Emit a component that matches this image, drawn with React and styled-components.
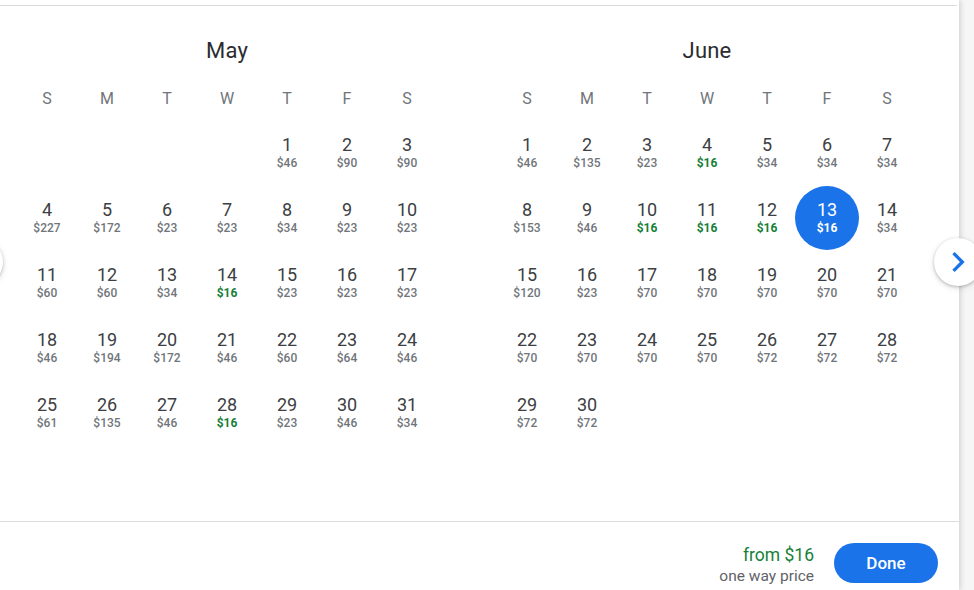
import styled, { createGlobalStyle } from "styled-components";

const GlobalStyle = createGlobalStyle`
  html, body {
    margin: 0;
    padding: 0;
    background: #f6f6f6;
    font-family: Roboto, "Noto Sans", Arial, sans-serif;
    overflow: hidden;
  }
`;

const Panel = styled.section`
  position: relative;
  width: 959px;
  height: 590px;
  background: #fff;
  box-shadow: 1px 0 6px rgba(0, 0, 0, 0.18);
  display: flex;
  flex-direction: column;
  padding-top: 5px;
  box-sizing: border-box;
`;

const TopRule = styled.div`
  border-top: 1px solid #dadce0;
  margin-right: 2px;
`;

const Months = styled.div`
  flex: 1;
  display: flex;
  gap: 60px;
  padding-left: 17px;
`;

const Month = styled.div`
  width: 420px;
  display: flex;
  flex-direction: column;
`;

const MonthTitle = styled.h2`
  margin: 31px 0 0;
  font-size: 22px;
  line-height: 28px;
  font-weight: 400;
  color: #2b2c2f;
  text-align: center;
  letter-spacing: 0.2px;
`;

const Weekdays = styled.div`
  display: grid;
  grid-template-columns: repeat(7, 60px);
  margin-top: 24px;
  font-size: 16px;
  line-height: 20px;
  color: #70757a;
  text-align: center;
`;

const Days = styled.div`
  display: grid;
  grid-template-columns: repeat(7, 60px);
  grid-auto-rows: 65px;
  margin-top: 11px;
`;

const Day = styled.div`
  grid-column-start: ${(p) => p.$start || "auto"};
  display: flex;
  align-items: center;
  justify-content: center;
`;

const DayInner = styled.div`
  width: 64px;
  height: 64px;
  flex-shrink: 0;
  border-radius: 50%;
  display: flex;
  flex-direction: column;
  align-items: center;
  justify-content: center;
  background: ${(p) => (p.$selected ? "#1a73e8" : "transparent")};
`;

const DayNum = styled.span`
  font-size: 18px;
  line-height: 20px;
  color: ${(p) => (p.$selected ? "#fff" : "#3c4043")};
`;

const Price = styled.span`
  font-size: 12px;
  line-height: 16px;
  font-weight: ${(p) => (p.$low || p.$selected ? 700 : 500)};
  color: ${(p) => (p.$selected ? "#fff" : p.$low ? "#188038" : "#70757a")};
`;

const Footer = styled.footer`
  height: 69px;
  box-sizing: border-box;
  border-top: 1px solid #dadce0;
  display: flex;
  justify-content: flex-end;
  align-items: flex-start;
  gap: 20px;
  padding: 21px 21px 0 0;
`;

const Summary = styled.div`
  display: flex;
  flex-direction: column;
  align-items: flex-end;
  margin-top: 2px;
`;

const FromPrice = styled.span`
  font-size: 17.5px;
  line-height: 20px;
  color: #188038;
`;

const PriceNote = styled.span`
  font-size: 15.5px;
  line-height: 22px;
  color: #5f6368;
`;

const DoneButton = styled.button`
  width: 104px;
  height: 40px;
  border: none;
  border-radius: 20px;
  background: #1a73e8;
  color: #fff;
  font-family: Roboto, Arial, sans-serif;
  font-size: 17px;
  font-weight: 500;
  cursor: pointer;
`;

const NavButton = styled.button`
  position: absolute;
  top: 238px;
  ${(p) => (p.$side === "left" ? "left: -45px;" : "right: -23px;")}
  width: 48px;
  height: 48px;
  border-radius: 50%;
  border: none;
  padding: 0;
  background: #fff;
  box-shadow: 0 1px 3px rgba(60, 64, 67, 0.3), 0 2px 6px rgba(60, 64, 67, 0.15);
  display: flex;
  align-items: center;
  justify-content: center;
  z-index: 2;
`;

const weekdays = ["S", "M", "T", "W", "T", "F", "S"];

const months = [
  {
    name: "May",
    start: 5,
    prices: [46, 90, 90, 227, 172, 23, 23, 34, 23, 23, 60, 60, 34, 16, 23, 23, 23, 46, 194, 172, 46, 60, 64, 46, 61, 135, 46, 16, 23, 46, 34],
  },
  {
    name: "June",
    start: 1,
    selected: 13,
    prices: [46, 135, 23, 16, 34, 34, 34, 153, 46, 16, 16, 16, 16, 34, 120, 23, 70, 70, 70, 70, 70, 70, 70, 70, 70, 72, 72, 72, 72, 72],
  },
];

function Chevron() {
  return (
    <svg width="40" height="40" viewBox="0 0 24 24" fill="#1a73e8">
      <path d="M10 6L8.59 7.41 13.17 12l-4.58 4.59L10 18l6-6z" />
    </svg>
  );
}

function MonthGrid({ month }) {
  return (
    <Month>
      <MonthTitle>{month.name}</MonthTitle>
      <Weekdays>
        {weekdays.map((d, i) => (
          <span key={i}>{d}</span>
        ))}
      </Weekdays>
      <Days>
        {month.prices.map((price, i) => {
          const day = i + 1;
          const selected = month.selected === day;
          const low = price === 16;
          return (
            <Day key={day} $start={i === 0 ? month.start : null}>
              <DayInner $selected={selected}>
                <DayNum $selected={selected}>{day}</DayNum>
                <Price $low={low} $selected={selected}>
                  ${price}
                </Price>
              </DayInner>
            </Day>
          );
        })}
      </Days>
    </Month>
  );
}

export default function App() {
  return (
    <>
      <GlobalStyle />
      <Panel>
        <TopRule />
        <Months>
          {months.map((m) => (
            <MonthGrid key={m.name} month={m} />
          ))}
        </Months>
        <Footer>
          <Summary>
            <FromPrice>from $16</FromPrice>
            <PriceNote>one way price</PriceNote>
          </Summary>
          <DoneButton>Done</DoneButton>
        </Footer>
        <NavButton $side="left" aria-label="Previous" />
        <NavButton $side="right" aria-label="Next">
          <Chevron />
        </NavButton>
      </Panel>
    </>
  );
}
